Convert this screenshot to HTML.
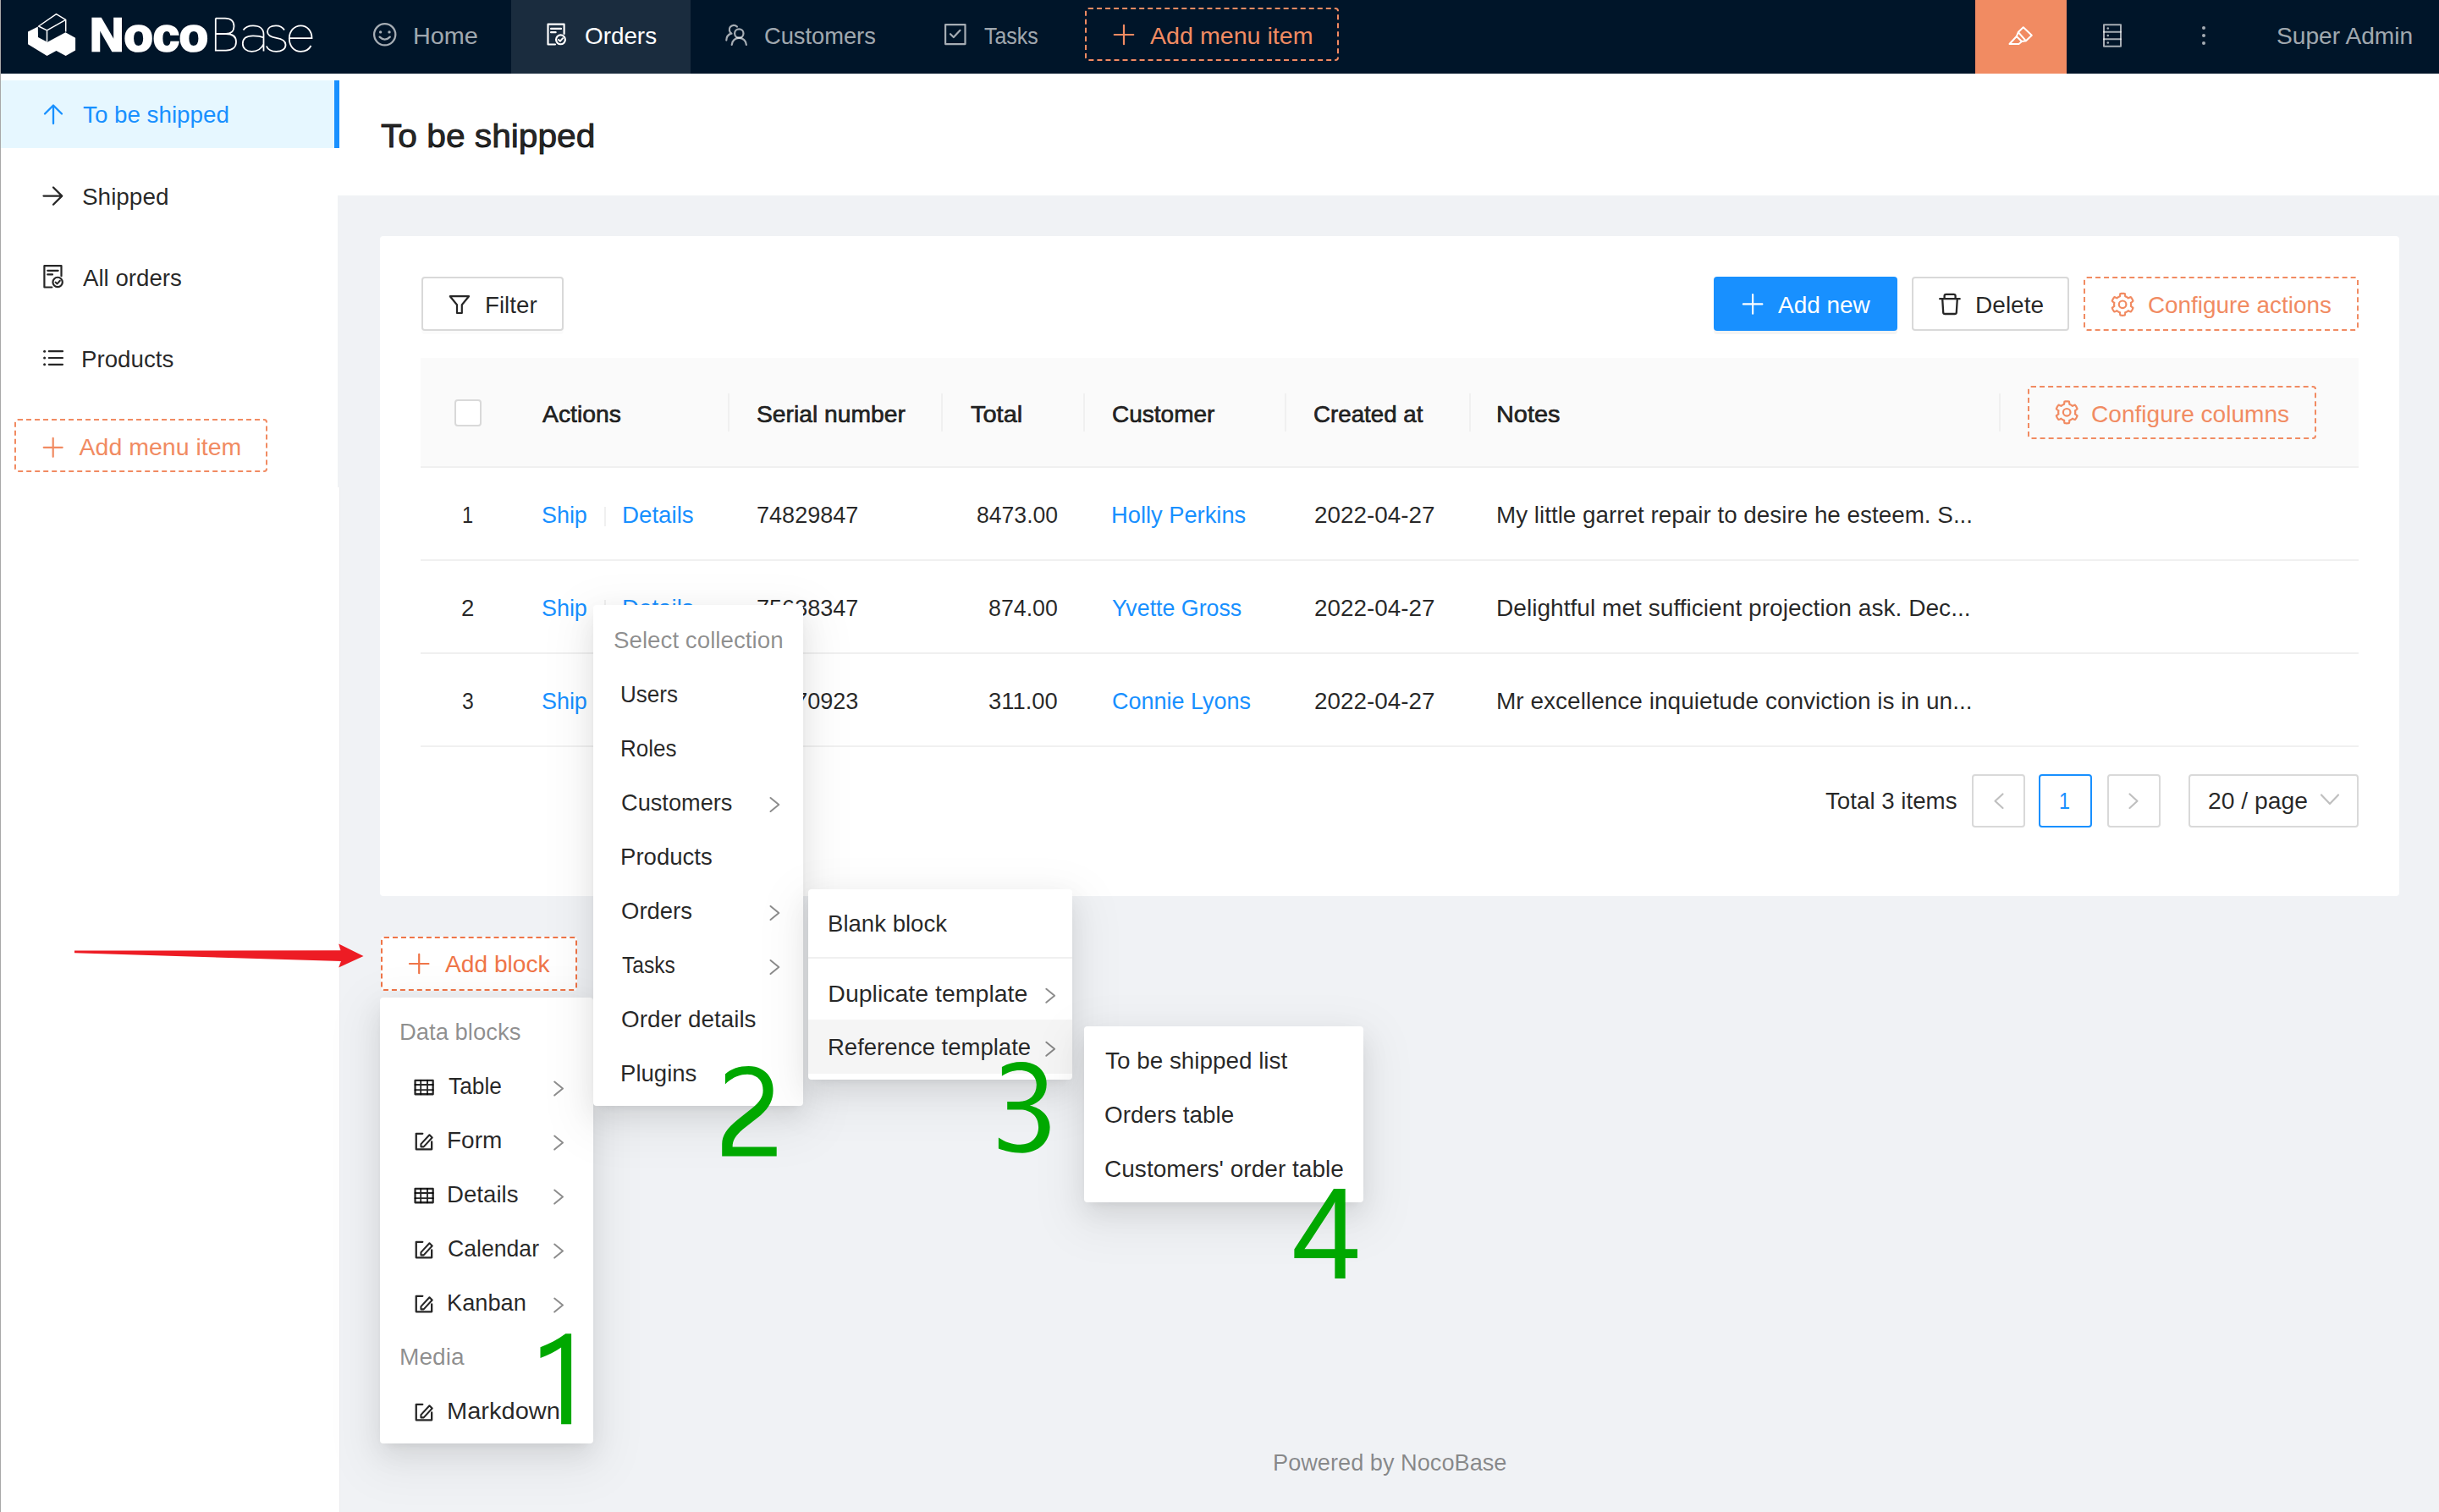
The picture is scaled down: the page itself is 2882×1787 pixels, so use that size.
<!DOCTYPE html><html><head><meta charset="utf-8"><style>
*{margin:0;padding:0;box-sizing:border-box}
html,body{width:2882px;height:1787px;overflow:hidden}
body{position:relative;background:#f0f2f5;font-family:"Liberation Sans",sans-serif}
.a{position:absolute;display:block}
.t{position:absolute;white-space:nowrap;transform-origin:0 0}
</style></head><body><div class="a" style="left:0px;top:0px;width:2882px;height:87px;background:#001529"></div><div class="a" style="left:604px;top:0px;width:212px;height:87px;background:rgba(255,255,255,0.1)"></div><div class="a" style="left:2334px;top:0px;width:108px;height:87px;background:#f18b62"></div><svg class="a" style="left:25px;top:8px;" width="355" height="67" viewBox="25 8 355 67"><path d="M33,37.5 L44.8,31.6 L45,44 L56,49.8 L77.4,38.2 L89.1,44.8 L89.1,59.4 L77.7,65.9 L66.5,59.9 L55.5,65.9 L33,52.3 Z" fill="#fff"/><path d="M45.6,31 L66.5,16.6 L77.7,23.3 L55.5,35.8 Z M55.5,35.8 V49.6 M77.7,23.3 V37.6" fill="none" stroke="#fff" stroke-width="1.5" stroke-linejoin="round"/><text x="106" y="60.2" font-family="Liberation Sans" font-weight="700" font-size="56" fill="#fff" stroke="#fff" stroke-width="2.6" textLength="140" lengthAdjust="spacingAndGlyphs">Noco</text><path d="M254.8,21.6 V59.6 H267 C275,59.6 279,55.5 279,49.5 C279,43.5 275,40 267,40 H254.8 M267,40 C273.5,40 276.5,36.5 276.5,31 C276.5,25.5 273,21.6 266,21.6 H254.8 M287.5,35.5 C290,31.5 294.5,30.3 299,30.3 C306.5,30.3 311.5,33.8 311.5,40.5 V60.5 M311.5,44.5 C308,42.8 303,42.3 299,42.3 C291.5,42.3 286.8,45.5 286.8,51.5 C286.8,57.5 291.5,60.8 297.5,60.8 C303.5,60.8 309,57.5 311.5,52 M336,35.5 C334,32 330,30.3 326,30.3 C319.5,30.3 316,33.5 316,37.5 C316,42 320.5,43.8 326.5,44.8 C333,45.8 337.5,47.8 337.5,53 C337.5,57.8 333,60.8 326.5,60.8 C320.5,60.8 316.5,58.5 314.8,54.5 M342,45.2 H368.5 C368.5,36 362.5,30.3 355.5,30.3 C347.5,30.3 341.8,37 341.8,45.5 C341.8,54.5 347.5,60.8 355.5,60.8 C361,60.8 365.5,58 367.5,54" fill="none" stroke="#fff" stroke-width="1.8"/></svg><svg class="a" style="left:438px;top:24px;" width="34" height="34" viewBox="438 24 34 34"><circle cx="454.7" cy="40.8" r="12.6" fill="none" stroke="rgba(255,255,255,0.65)" stroke-width="2.3" stroke-linecap="round" stroke-linejoin="round"/><circle cx="449.6" cy="37.9" r="1.7" fill="rgba(255,255,255,0.65)"/><circle cx="460" cy="37.9" r="1.7" fill="rgba(255,255,255,0.65)"/><path d="M448.6,43.6 Q454.7,49.6 460.8,43.6" fill="none" stroke="rgba(255,255,255,0.65)" stroke-width="2.3" stroke-linecap="round" stroke-linejoin="round"/></svg><svg class="a" style="left:644px;top:25px;" width="27" height="32" viewBox="644 25 27 32"><path d="M655.985,52.5 H647.5 V28.6 H666.6 V39.88249999999998" fill="none" stroke="#fff" stroke-width="2.2" stroke-linecap="round" stroke-linejoin="round" stroke-linecap="butt" stroke-linejoin="miter"/><path d="M651.086,33.8945 H663.014 M651.086,38.201 H656.624" fill="none" stroke="#fff" stroke-width="2.2" stroke-linecap="round" stroke-linejoin="round" stroke-linecap="butt"/><circle cx="662.4815" cy="46.814" r="5.4315000000000175" fill="none" stroke="#fff" stroke-width="2.2" stroke-linecap="round" stroke-linejoin="round"/><path d="M660.037325,46.92263 L661.93835,48.715025000000004 L665.08862,45.184549999999994" fill="none" stroke="#fff" stroke-width="1.9800000000000002" stroke-linecap="round" stroke-linejoin="round"/></svg><svg class="a" style="left:852px;top:24px;" width="36" height="34" viewBox="852 24 36 34"><path d="M870.9,31.6 A5.2,5.2 0 1 0 864.5,39.6 M864.2,39.4 C860.5,40.8 858.3,44.2 858.3,47.6" fill="none" stroke="rgba(255,255,255,0.65)" stroke-width="2.2" stroke-linecap="round" stroke-linejoin="round"/><circle cx="873.3" cy="39.5" r="5.2" fill="none" stroke="rgba(255,255,255,0.65)" stroke-width="2.2" stroke-linecap="round" stroke-linejoin="round"/><path d="M864.7,53 C864.9,48 868.8,44.9 873.3,44.9 C877.8,44.9 881.7,48 881.9,53" fill="none" stroke="rgba(255,255,255,0.65)" stroke-width="2.2" stroke-linecap="round" stroke-linejoin="round"/></svg><svg class="a" style="left:1112px;top:24px;" width="34" height="34" viewBox="1112 24 34 34"><rect x="1117.1" y="29.1" width="23.4" height="23" fill="none" stroke="rgba(255,255,255,0.65)" stroke-width="2.2" stroke-linecap="round" stroke-linejoin="round" stroke-linejoin="miter"/><path d="M1123,40.2 L1126.8,44 L1134.5,35.8" fill="none" stroke="rgba(255,255,255,0.65)" stroke-width="2.2" stroke-linecap="round" stroke-linejoin="round" stroke-linecap="butt" stroke-linejoin="miter"/></svg><div class="a" style="left:1282px;top:9px;width:300px;height:63px;border:2px dashed #f18b62;border-radius:4px"></div><svg class="a" style="left:1313px;top:26px;" width="30" height="30" viewBox="1313 26 30 30"><path d="M1316.75,41 H1339.25 M1328,29.75 V52.25" fill="none" stroke="#f18b62" stroke-width="2.2" stroke-linecap="round" stroke-linejoin="round"/></svg><svg class="a" style="left:2370px;top:26px;" width="38" height="32" viewBox="2370 26 38 32"><path d="M2384.8,38 L2390.8,32.2 L2400.8,41.7 L2394,48.3 Z" fill="none" stroke="#fff" stroke-width="2" stroke-linejoin="round"/><path d="M2384.8,38 L2382.8,43 L2389,49 L2394,48.3 M2382.8,43 L2374.5,52 H2385.5 L2389,49" fill="none" stroke="#fff" stroke-width="2" stroke-linejoin="round"/></svg><svg class="a" style="left:2482px;top:25px;" width="28" height="34" viewBox="2482 25 28 34"><rect x="2486" y="29.2" width="20" height="25.5" fill="none" stroke="rgba(255,255,255,0.65)" stroke-width="2" stroke-linecap="round" stroke-linejoin="round" stroke-linejoin="miter"/><path d="M2486,37.8 H2506 M2486,46.2 H2506" fill="none" stroke="rgba(255,255,255,0.65)" stroke-width="2" stroke-linecap="round" stroke-linejoin="round"/><circle cx="2490.8" cy="33.5" r="1.3" fill="rgba(255,255,255,0.65)"/><circle cx="2490.8" cy="42" r="1.3" fill="rgba(255,255,255,0.65)"/><circle cx="2490.8" cy="50.5" r="1.3" fill="rgba(255,255,255,0.65)"/></svg><svg class="a" style="left:2598px;top:26px;" width="12" height="32" viewBox="2598 26 12 32"><circle cx="2604" cy="33" r="2" fill="rgba(255,255,255,0.65)"/><circle cx="2604" cy="42" r="2" fill="rgba(255,255,255,0.65)"/><circle cx="2604" cy="51" r="2" fill="rgba(255,255,255,0.65)"/></svg><div class="t" style="left:487.78px;top:27.57px;font-size:28.5px;line-height:28.5px;color:rgba(255,255,255,0.65);transform:scaleX(1.0110);">Home</div><div class="t" style="left:691.02px;top:27.57px;font-size:28.5px;line-height:28.5px;color:#fff;transform:scaleX(0.9765);">Orders</div><div class="t" style="left:903.34px;top:27.57px;font-size:28.5px;line-height:28.5px;color:rgba(255,255,255,0.65);transform:scaleX(0.9566);">Customers</div><div class="t" style="left:1163.00px;top:27.57px;font-size:28.5px;line-height:28.5px;color:rgba(255,255,255,0.65);transform:scaleX(0.8736);">Tasks</div><div class="t" style="left:1358.80px;top:27.57px;font-size:28.5px;line-height:28.5px;color:#f18b62;transform:scaleX(1.0047);">Add menu item</div><div class="t" style="left:2690.01px;top:27.57px;font-size:28.5px;line-height:28.5px;color:rgba(255,255,255,0.65);transform:scaleX(0.9876);">Super Admin</div><div class="a" style="left:0px;top:87px;width:401px;height:1700px;background:#fff"></div><div class="a" style="left:399px;top:231px;width:2px;height:345px;background:#f0f2f5"></div><div class="a" style="left:401px;top:576px;width:1px;height:1211px;background:#ebecef"></div><div class="a" style="left:1px;top:95px;width:394px;height:80px;background:#e6f7ff"></div><div class="a" style="left:395px;top:95px;width:6px;height:80px;background:#1890ff"></div><svg class="a" style="left:48px;top:120px;" width="30" height="30" viewBox="48 120 30 30"><path d="M63,146 V125 M53,134.5 L63,124.5 L73,134.5" fill="none" stroke="#1890ff" stroke-width="2.3" stroke-linecap="round" stroke-linejoin="round" stroke-linecap="butt" stroke-linejoin="miter"/></svg><svg class="a" style="left:47px;top:217px;" width="31" height="29" viewBox="47 217 31 29"><path d="M51.5,231.6 H72.5 M63,221.5 L73.2,231.6 L63,241.7" fill="none" stroke="rgba(0,0,0,0.85)" stroke-width="2.3" stroke-linecap="round" stroke-linejoin="round" stroke-linecap="butt" stroke-linejoin="miter"/></svg><svg class="a" style="left:49px;top:311px;" width="28" height="33" viewBox="49 311 28 33"><path d="M61.334999999999994,339.5 H52.4 V314.20000000000005 H72.5 V326.2635" fill="none" stroke="rgba(0,0,0,0.85)" stroke-width="2.2" stroke-linecap="round" stroke-linejoin="round" stroke-linecap="butt" stroke-linejoin="miter"/><path d="M56.205999999999996,319.83750000000003 H68.69399999999999 M56.205999999999996,324.375 H62.004" fill="none" stroke="rgba(0,0,0,0.85)" stroke-width="2.2" stroke-linecap="round" stroke-linejoin="round" stroke-linecap="butt"/><circle cx="68.1365" cy="333.45000000000005" r="5.6865" fill="none" stroke="rgba(0,0,0,0.85)" stroke-width="2.2" stroke-linecap="round" stroke-linejoin="round"/><path d="M65.577575,333.56373 L67.56784999999999,335.44027500000004 L70.86601999999999,331.7440500000001" fill="none" stroke="rgba(0,0,0,0.85)" stroke-width="1.9800000000000002" stroke-linecap="round" stroke-linejoin="round"/></svg><svg class="a" style="left:47px;top:410px;" width="31" height="26" viewBox="47 410 31 26"><circle cx="52.6" cy="415.2" r="1.5" fill="rgba(0,0,0,0.85)"/><circle cx="52.6" cy="423" r="1.5" fill="rgba(0,0,0,0.85)"/><circle cx="52.6" cy="430.8" r="1.5" fill="rgba(0,0,0,0.85)"/><path d="M57.8,415.2 H74 M57.8,423 H74 M57.8,430.8 H74" fill="none" stroke="rgba(0,0,0,0.85)" stroke-width="2.2" stroke-linecap="round" stroke-linejoin="round" stroke-linecap="butt"/></svg><div class="a" style="left:17px;top:495px;width:299px;height:63px;border:2px dashed #f18b62;border-radius:4px"></div><svg class="a" style="left:48px;top:514px;" width="29" height="29" viewBox="48 514 29 29"><path d="M51.7,528.8 H73.7 M62.7,517.8 V539.8" fill="none" stroke="#f18b62" stroke-width="2.2" stroke-linecap="round" stroke-linejoin="round"/></svg><div class="t" style="left:97.60px;top:121.37px;font-size:28.5px;line-height:28.5px;color:#1890ff;transform:scaleX(0.9739);">To be shipped</div><div class="t" style="left:96.52px;top:217.87px;font-size:28.5px;line-height:28.5px;color:rgba(0,0,0,0.85);transform:scaleX(0.9794);">Shipped</div><div class="t" style="left:97.50px;top:313.87px;font-size:28.5px;line-height:28.5px;color:rgba(0,0,0,0.85);transform:scaleX(0.9708);">All orders</div><div class="t" style="left:95.56px;top:409.67px;font-size:28.5px;line-height:28.5px;color:rgba(0,0,0,0.85);transform:scaleX(0.9718);">Products</div><div class="t" style="left:93.60px;top:513.87px;font-size:28.5px;line-height:28.5px;color:#f18b62;">Add menu item</div><div class="a" style="left:0px;top:0px;width:1px;height:1787px;background:#a8a8a8"></div><div class="a" style="left:401px;top:87px;width:2481px;height:144px;background:#fff"></div><div class="t" style="left:449.70px;top:141.36px;font-size:39.5px;line-height:39.5px;color:rgba(0,0,0,0.85);-webkit-text-stroke:0.9px rgba(0,0,0,0.85);transform:scaleX(1.0299);">To be shipped</div><div class="a" style="left:449px;top:279px;width:2386px;height:780px;background:#fff;border-radius:4px"></div><div class="a" style="left:498px;top:327px;width:168px;height:64px;border:2px solid #d9d9d9;border-radius:4px;background:#fff;box-shadow:0 4px 0 rgba(0,0,0,0.015)"></div><svg class="a" style="left:527px;top:345px;" width="33" height="30" viewBox="527 345 33 30"><path d="M531.8,350.2 H554 L545.8,360.2 V370 H540 V360.2 Z" fill="none" stroke="rgba(0,0,0,0.85)" stroke-width="2.2" stroke-linecap="round" stroke-linejoin="round" stroke-linejoin="miter"/></svg><div class="a" style="left:2025px;top:327px;width:217px;height:64px;background:#1890ff;border-radius:4px;box-shadow:0 4px 0 rgba(0,0,0,0.045)"></div><svg class="a" style="left:2056px;top:345px;" width="30" height="29" viewBox="2056 345 30 29"><path d="M2059.85,359.4 H2082.35 M2071.1,348.15 V370.65" fill="none" stroke="#fff" stroke-width="2.2" stroke-linecap="round" stroke-linejoin="round"/></svg><div class="a" style="left:2259px;top:327px;width:186px;height:64px;border:2px solid #d9d9d9;border-radius:4px;background:#fff"></div><svg class="a" style="left:2288px;top:343px;" width="32" height="33" viewBox="2288 343 32 33"><path d="M2292.2,353.2 H2315.7 M2297.6,353 V349.8 Q2297.6,347.8 2299.6,347.8 H2308.6 Q2310.6,347.8 2310.6,349.8 V353 M2295.2,353.4 L2296.2,369.3 Q2296.4,371 2298.2,371 H2309.8 Q2311.6,371 2311.8,369.3 L2312.8,353.4" fill="none" stroke="rgba(0,0,0,0.85)" stroke-width="2.3" stroke-linecap="round" stroke-linejoin="round"/></svg><div class="a" style="left:2462px;top:327px;width:325px;height:64px;border:2px dashed #f18b62;border-radius:4px"></div><svg class="a" style="left:2492px;top:343px;" width="33" height="33" viewBox="2492 343 33 33"><path d="M2508.10,346.80 L2508.44,346.80 L2508.78,346.82 L2509.12,346.84 L2509.46,346.87 L2509.80,346.91 L2510.13,346.96 L2510.47,347.02 L2510.80,347.08 L2510.97,347.86 L2511.08,348.69 L2511.14,349.52 L2511.19,350.29 L2511.44,350.37 L2511.68,350.46 L2511.93,350.56 L2512.17,350.66 L2512.41,350.77 L2512.64,350.89 L2512.87,351.01 L2513.10,351.14 L2513.32,351.27 L2513.55,351.41 L2513.76,351.56 L2513.98,351.71 L2514.19,351.87 L2514.39,352.03 L2514.59,352.20 L2514.79,352.37 L2515.48,352.03 L2516.23,351.67 L2517.01,351.35 L2517.76,351.10 L2517.99,351.36 L2518.20,351.62 L2518.41,351.89 L2518.62,352.16 L2518.81,352.44 L2519.00,352.72 L2519.18,353.01 L2519.36,353.30 L2519.52,353.60 L2519.68,353.90 L2519.83,354.20 L2519.98,354.51 L2520.11,354.83 L2520.24,355.14 L2520.35,355.46 L2520.46,355.78 L2519.88,356.31 L2519.21,356.82 L2518.52,357.30 L2517.88,357.72 L2517.93,357.98 L2517.98,358.24 L2518.01,358.49 L2518.05,358.75 L2518.07,359.02 L2518.09,359.28 L2518.10,359.54 L2518.10,359.80 L2518.10,360.06 L2518.09,360.32 L2518.07,360.58 L2518.05,360.85 L2518.01,361.11 L2517.98,361.36 L2517.93,361.62 L2517.88,361.88 L2518.52,362.30 L2519.21,362.78 L2519.88,363.29 L2520.46,363.82 L2520.35,364.14 L2520.24,364.46 L2520.11,364.77 L2519.98,365.09 L2519.83,365.40 L2519.68,365.70 L2519.52,366.00 L2519.36,366.30 L2519.18,366.59 L2519.00,366.88 L2518.81,367.16 L2518.62,367.44 L2518.41,367.71 L2518.20,367.98 L2517.99,368.24 L2517.76,368.50 L2517.01,368.25 L2516.23,367.93 L2515.48,367.57 L2514.79,367.23 L2514.59,367.40 L2514.39,367.57 L2514.19,367.73 L2513.98,367.89 L2513.76,368.04 L2513.55,368.19 L2513.32,368.33 L2513.10,368.46 L2512.87,368.59 L2512.64,368.71 L2512.41,368.83 L2512.17,368.94 L2511.93,369.04 L2511.68,369.14 L2511.44,369.23 L2511.19,369.31 L2511.14,370.08 L2511.08,370.91 L2510.97,371.74 L2510.80,372.52 L2510.47,372.58 L2510.13,372.64 L2509.80,372.69 L2509.46,372.73 L2509.12,372.76 L2508.78,372.78 L2508.44,372.80 L2508.10,372.80 L2507.76,372.80 L2507.42,372.78 L2507.08,372.76 L2506.74,372.73 L2506.40,372.69 L2506.07,372.64 L2505.73,372.58 L2505.40,372.52 L2505.23,371.74 L2505.12,370.91 L2505.06,370.08 L2505.01,369.31 L2504.76,369.23 L2504.52,369.14 L2504.27,369.04 L2504.03,368.94 L2503.79,368.83 L2503.56,368.71 L2503.33,368.59 L2503.10,368.46 L2502.88,368.33 L2502.65,368.19 L2502.44,368.04 L2502.22,367.89 L2502.01,367.73 L2501.81,367.57 L2501.61,367.40 L2501.41,367.23 L2500.72,367.57 L2499.97,367.93 L2499.19,368.25 L2498.44,368.50 L2498.21,368.24 L2498.00,367.98 L2497.79,367.71 L2497.58,367.44 L2497.39,367.16 L2497.20,366.88 L2497.02,366.59 L2496.84,366.30 L2496.68,366.00 L2496.52,365.70 L2496.37,365.40 L2496.22,365.09 L2496.09,364.77 L2495.96,364.46 L2495.85,364.14 L2495.74,363.82 L2496.32,363.29 L2496.99,362.78 L2497.68,362.30 L2498.32,361.88 L2498.27,361.62 L2498.22,361.36 L2498.19,361.11 L2498.15,360.85 L2498.13,360.58 L2498.11,360.32 L2498.10,360.06 L2498.10,359.80 L2498.10,359.54 L2498.11,359.28 L2498.13,359.02 L2498.15,358.75 L2498.19,358.49 L2498.22,358.24 L2498.27,357.98 L2498.32,357.72 L2497.68,357.30 L2496.99,356.82 L2496.32,356.31 L2495.74,355.78 L2495.85,355.46 L2495.96,355.14 L2496.09,354.83 L2496.22,354.51 L2496.37,354.20 L2496.52,353.90 L2496.68,353.60 L2496.84,353.30 L2497.02,353.01 L2497.20,352.72 L2497.39,352.44 L2497.58,352.16 L2497.79,351.89 L2498.00,351.62 L2498.21,351.36 L2498.44,351.10 L2499.19,351.35 L2499.97,351.67 L2500.72,352.03 L2501.41,352.37 L2501.61,352.20 L2501.81,352.03 L2502.01,351.87 L2502.22,351.71 L2502.44,351.56 L2502.65,351.41 L2502.88,351.27 L2503.10,351.14 L2503.33,351.01 L2503.56,350.89 L2503.79,350.77 L2504.03,350.66 L2504.27,350.56 L2504.52,350.46 L2504.76,350.37 L2505.01,350.29 L2505.06,349.52 L2505.12,348.69 L2505.23,347.86 L2505.40,347.08 L2505.73,347.02 L2506.07,346.96 L2506.40,346.91 L2506.74,346.87 L2507.08,346.84 L2507.42,346.82 L2507.76,346.80 L2508.10,346.80 Z" fill="none" stroke="#f18b62" stroke-width="2.2" stroke-linecap="round" stroke-linejoin="round"/><circle cx="2508.1" cy="359.8" r="4.3" fill="none" stroke="#f18b62" stroke-width="2.2" stroke-linecap="round" stroke-linejoin="round"/></svg><div class="t" style="left:572.65px;top:345.87px;font-size:28.5px;line-height:28.5px;color:rgba(0,0,0,0.85);transform:scaleX(0.9738);">Filter</div><div class="t" style="left:2101.00px;top:345.87px;font-size:28.5px;line-height:28.5px;color:#fff;transform:scaleX(0.9802);">Add new</div><div class="t" style="left:2333.63px;top:345.87px;font-size:28.5px;line-height:28.5px;color:rgba(0,0,0,0.85);transform:scaleX(0.9848);">Delete</div><div class="t" style="left:2537.92px;top:345.87px;font-size:28.5px;line-height:28.5px;color:#f18b62;transform:scaleX(0.9777);">Configure actions</div><div class="a" style="left:497px;top:423px;width:2290px;height:128px;background:#fafafa"></div><div class="a" style="left:497px;top:551px;width:2290px;height:2px;background:#f0f0f0"></div><div class="a" style="left:860px;top:465px;width:2px;height:45px;background:#f0f0f0"></div><div class="a" style="left:1112px;top:465px;width:2px;height:45px;background:#f0f0f0"></div><div class="a" style="left:1280px;top:465px;width:2px;height:45px;background:#f0f0f0"></div><div class="a" style="left:1518px;top:465px;width:2px;height:45px;background:#f0f0f0"></div><div class="a" style="left:1735.5px;top:465px;width:2.0px;height:45px;background:#f0f0f0"></div><div class="a" style="left:2361.7px;top:465px;width:2.0px;height:45px;background:#f0f0f0"></div><div class="a" style="left:537px;top:472px;width:32px;height:32px;border:2px solid #d9d9d9;border-radius:4px;background:#fff"></div><div class="a" style="left:2396px;top:456px;width:341px;height:63px;border:2px dashed #f18b62;border-radius:4px"></div><svg class="a" style="left:2426px;top:471px;" width="33" height="33" viewBox="2426 471 33 33"><path d="M2442.20,474.30 L2442.54,474.30 L2442.88,474.32 L2443.22,474.34 L2443.56,474.37 L2443.90,474.41 L2444.23,474.46 L2444.57,474.52 L2444.90,474.58 L2445.07,475.36 L2445.18,476.19 L2445.24,477.02 L2445.29,477.79 L2445.54,477.87 L2445.78,477.96 L2446.03,478.06 L2446.27,478.16 L2446.51,478.27 L2446.74,478.39 L2446.97,478.51 L2447.20,478.64 L2447.42,478.77 L2447.65,478.91 L2447.86,479.06 L2448.08,479.21 L2448.29,479.37 L2448.49,479.53 L2448.69,479.70 L2448.89,479.87 L2449.58,479.53 L2450.33,479.17 L2451.11,478.85 L2451.86,478.60 L2452.09,478.86 L2452.30,479.12 L2452.51,479.39 L2452.72,479.66 L2452.91,479.94 L2453.10,480.22 L2453.28,480.51 L2453.46,480.80 L2453.62,481.10 L2453.78,481.40 L2453.93,481.70 L2454.08,482.01 L2454.21,482.33 L2454.34,482.64 L2454.45,482.96 L2454.56,483.28 L2453.98,483.81 L2453.31,484.32 L2452.62,484.80 L2451.98,485.22 L2452.03,485.48 L2452.08,485.74 L2452.11,485.99 L2452.15,486.25 L2452.17,486.52 L2452.19,486.78 L2452.20,487.04 L2452.20,487.30 L2452.20,487.56 L2452.19,487.82 L2452.17,488.08 L2452.15,488.35 L2452.11,488.61 L2452.08,488.86 L2452.03,489.12 L2451.98,489.38 L2452.62,489.80 L2453.31,490.28 L2453.98,490.79 L2454.56,491.32 L2454.45,491.64 L2454.34,491.96 L2454.21,492.27 L2454.08,492.59 L2453.93,492.90 L2453.78,493.20 L2453.62,493.50 L2453.46,493.80 L2453.28,494.09 L2453.10,494.38 L2452.91,494.66 L2452.72,494.94 L2452.51,495.21 L2452.30,495.48 L2452.09,495.74 L2451.86,496.00 L2451.11,495.75 L2450.33,495.43 L2449.58,495.07 L2448.89,494.73 L2448.69,494.90 L2448.49,495.07 L2448.29,495.23 L2448.08,495.39 L2447.86,495.54 L2447.65,495.69 L2447.42,495.83 L2447.20,495.96 L2446.97,496.09 L2446.74,496.21 L2446.51,496.33 L2446.27,496.44 L2446.03,496.54 L2445.78,496.64 L2445.54,496.73 L2445.29,496.81 L2445.24,497.58 L2445.18,498.41 L2445.07,499.24 L2444.90,500.02 L2444.57,500.08 L2444.23,500.14 L2443.90,500.19 L2443.56,500.23 L2443.22,500.26 L2442.88,500.28 L2442.54,500.30 L2442.20,500.30 L2441.86,500.30 L2441.52,500.28 L2441.18,500.26 L2440.84,500.23 L2440.50,500.19 L2440.17,500.14 L2439.83,500.08 L2439.50,500.02 L2439.33,499.24 L2439.22,498.41 L2439.16,497.58 L2439.11,496.81 L2438.86,496.73 L2438.62,496.64 L2438.37,496.54 L2438.13,496.44 L2437.89,496.33 L2437.66,496.21 L2437.43,496.09 L2437.20,495.96 L2436.98,495.83 L2436.75,495.69 L2436.54,495.54 L2436.32,495.39 L2436.11,495.23 L2435.91,495.07 L2435.71,494.90 L2435.51,494.73 L2434.82,495.07 L2434.07,495.43 L2433.29,495.75 L2432.54,496.00 L2432.31,495.74 L2432.10,495.48 L2431.89,495.21 L2431.68,494.94 L2431.49,494.66 L2431.30,494.38 L2431.12,494.09 L2430.94,493.80 L2430.78,493.50 L2430.62,493.20 L2430.47,492.90 L2430.32,492.59 L2430.19,492.27 L2430.06,491.96 L2429.95,491.64 L2429.84,491.32 L2430.42,490.79 L2431.09,490.28 L2431.78,489.80 L2432.42,489.38 L2432.37,489.12 L2432.32,488.86 L2432.29,488.61 L2432.25,488.35 L2432.23,488.08 L2432.21,487.82 L2432.20,487.56 L2432.20,487.30 L2432.20,487.04 L2432.21,486.78 L2432.23,486.52 L2432.25,486.25 L2432.29,485.99 L2432.32,485.74 L2432.37,485.48 L2432.42,485.22 L2431.78,484.80 L2431.09,484.32 L2430.42,483.81 L2429.84,483.28 L2429.95,482.96 L2430.06,482.64 L2430.19,482.33 L2430.32,482.01 L2430.47,481.70 L2430.62,481.40 L2430.78,481.10 L2430.94,480.80 L2431.12,480.51 L2431.30,480.22 L2431.49,479.94 L2431.68,479.66 L2431.89,479.39 L2432.10,479.12 L2432.31,478.86 L2432.54,478.60 L2433.29,478.85 L2434.07,479.17 L2434.82,479.53 L2435.51,479.87 L2435.71,479.70 L2435.91,479.53 L2436.11,479.37 L2436.32,479.21 L2436.54,479.06 L2436.75,478.91 L2436.98,478.77 L2437.20,478.64 L2437.43,478.51 L2437.66,478.39 L2437.89,478.27 L2438.13,478.16 L2438.37,478.06 L2438.62,477.96 L2438.86,477.87 L2439.11,477.79 L2439.16,477.02 L2439.22,476.19 L2439.33,475.36 L2439.50,474.58 L2439.83,474.52 L2440.17,474.46 L2440.50,474.41 L2440.84,474.37 L2441.18,474.34 L2441.52,474.32 L2441.86,474.30 L2442.20,474.30 Z" fill="none" stroke="#f18b62" stroke-width="2.2" stroke-linecap="round" stroke-linejoin="round"/><circle cx="2442.2" cy="487.3" r="4.3" fill="none" stroke="#f18b62" stroke-width="2.2" stroke-linecap="round" stroke-linejoin="round"/></svg><div class="t" style="left:641.49px;top:474.87px;font-size:28.5px;line-height:28.5px;color:rgba(0,0,0,0.85);-webkit-text-stroke:0.7px rgba(0,0,0,0.85);transform:scaleX(0.9936);">Actions</div><div class="t" style="left:894.01px;top:474.87px;font-size:28.5px;line-height:28.5px;color:rgba(0,0,0,0.85);-webkit-text-stroke:0.7px rgba(0,0,0,0.85);transform:scaleX(0.9910);">Serial number</div><div class="t" style="left:1147.00px;top:474.87px;font-size:28.5px;line-height:28.5px;color:rgba(0,0,0,0.85);-webkit-text-stroke:0.7px rgba(0,0,0,0.85);transform:scaleX(1.0169);">Total</div><div class="t" style="left:1313.72px;top:474.87px;font-size:28.5px;line-height:28.5px;color:rgba(0,0,0,0.85);-webkit-text-stroke:0.7px rgba(0,0,0,0.85);transform:scaleX(0.9829);">Customer</div><div class="t" style="left:1552.03px;top:474.87px;font-size:28.5px;line-height:28.5px;color:rgba(0,0,0,0.85);-webkit-text-stroke:0.7px rgba(0,0,0,0.85);transform:scaleX(0.9722);">Created at</div><div class="t" style="left:1767.97px;top:474.87px;font-size:28.5px;line-height:28.5px;color:rgba(0,0,0,0.85);-webkit-text-stroke:0.7px rgba(0,0,0,0.85);transform:scaleX(1.0139);">Notes</div><div class="t" style="left:2471.01px;top:474.87px;font-size:28.5px;line-height:28.5px;color:#f18b62;transform:scaleX(0.9852);">Configure columns</div><div class="a" style="left:497px;top:661px;width:2290px;height:2px;background:#f0f0f0"></div><div class="a" style="left:714px;top:599px;width:2px;height:23px;background:#f0f0f0"></div><div class="t" style="left:546.24px;top:593.87px;font-size:28.5px;line-height:28.5px;color:rgba(0,0,0,0.85);transform:scaleX(0.8308);">1</div><div class="t" style="left:640.36px;top:593.87px;font-size:28.5px;line-height:28.5px;color:#1890ff;transform:scaleX(0.9436);">Ship</div><div class="t" style="left:735.46px;top:593.87px;font-size:28.5px;line-height:28.5px;color:#1890ff;transform:scaleX(0.9714);">Details</div><div class="t" style="left:893.95px;top:593.87px;font-size:28.5px;line-height:28.5px;color:rgba(0,0,0,0.85);transform:scaleX(0.9496);">74829847</div><div class="t" style="left:1153.67px;top:593.87px;font-size:28.5px;line-height:28.5px;color:rgba(0,0,0,0.85);transform:scaleX(0.9327);">8473.00</div><div class="t" style="left:1312.99px;top:593.87px;font-size:28.5px;line-height:28.5px;color:#1890ff;transform:scaleX(0.9573);">Holly Perkins</div><div class="t" style="left:1552.72px;top:593.87px;font-size:28.5px;line-height:28.5px;color:rgba(0,0,0,0.85);transform:scaleX(0.9778);">2022-04-27</div><div class="t" style="left:1768.05px;top:593.87px;font-size:28.5px;line-height:28.5px;color:rgba(0,0,0,0.85);transform:scaleX(0.9766);">My little garret repair to desire he esteem. S...</div><div class="a" style="left:497px;top:771px;width:2290px;height:2px;background:#f0f0f0"></div><div class="a" style="left:714px;top:709px;width:2px;height:23px;background:#f0f0f0"></div><div class="t" style="left:544.73px;top:703.87px;font-size:28.5px;line-height:28.5px;color:rgba(0,0,0,0.85);transform:scaleX(0.9714);">2</div><div class="t" style="left:640.36px;top:703.87px;font-size:28.5px;line-height:28.5px;color:#1890ff;transform:scaleX(0.9436);">Ship</div><div class="t" style="left:735.46px;top:703.87px;font-size:28.5px;line-height:28.5px;color:#1890ff;transform:scaleX(0.9714);">Details</div><div class="t" style="left:893.95px;top:703.87px;font-size:28.5px;line-height:28.5px;color:rgba(0,0,0,0.85);transform:scaleX(0.9496);">75638347</div><div class="t" style="left:1168.06px;top:703.87px;font-size:28.5px;line-height:28.5px;color:rgba(0,0,0,0.85);transform:scaleX(0.9388);">874.00</div><div class="t" style="left:1313.96px;top:703.87px;font-size:28.5px;line-height:28.5px;color:#1890ff;transform:scaleX(0.9389);">Yvette Gross</div><div class="t" style="left:1552.72px;top:703.87px;font-size:28.5px;line-height:28.5px;color:rgba(0,0,0,0.85);transform:scaleX(0.9778);">2022-04-27</div><div class="t" style="left:1768.03px;top:703.87px;font-size:28.5px;line-height:28.5px;color:rgba(0,0,0,0.85);transform:scaleX(0.9867);">Delightful met sufficient projection ask. Dec...</div><div class="a" style="left:497px;top:881px;width:2290px;height:2px;background:#f0f0f0"></div><div class="a" style="left:714px;top:819px;width:2px;height:23px;background:#f0f0f0"></div><div class="t" style="left:545.53px;top:813.87px;font-size:28.5px;line-height:28.5px;color:rgba(0,0,0,0.85);transform:scaleX(0.8714);">3</div><div class="t" style="left:640.36px;top:813.87px;font-size:28.5px;line-height:28.5px;color:#1890ff;transform:scaleX(0.9436);">Ship</div><div class="t" style="left:735.46px;top:813.87px;font-size:28.5px;line-height:28.5px;color:#1890ff;transform:scaleX(0.9714);">Details</div><div class="t" style="left:893.95px;top:813.87px;font-size:28.5px;line-height:28.5px;color:rgba(0,0,0,0.85);transform:scaleX(0.9496);">74570923</div><div class="t" style="left:1168.04px;top:813.87px;font-size:28.5px;line-height:28.5px;color:rgba(0,0,0,0.85);transform:scaleX(0.9614);">311.00</div><div class="t" style="left:1313.95px;top:813.87px;font-size:28.5px;line-height:28.5px;color:#1890ff;transform:scaleX(0.9459);">Connie Lyons</div><div class="t" style="left:1552.72px;top:813.87px;font-size:28.5px;line-height:28.5px;color:rgba(0,0,0,0.85);transform:scaleX(0.9778);">2022-04-27</div><div class="t" style="left:1768.03px;top:813.87px;font-size:28.5px;line-height:28.5px;color:rgba(0,0,0,0.85);transform:scaleX(0.9836);">Mr excellence inquietude conviction is in un...</div><div class="a" style="left:2330px;top:915px;width:63px;height:63px;border:2px solid #d9d9d9;border-radius:4px"></div><div class="a" style="left:2409px;top:915px;width:63px;height:63px;border:2px solid #1890ff;border-radius:4px"></div><div class="a" style="left:2490px;top:915px;width:63px;height:63px;border:2px solid #d9d9d9;border-radius:4px"></div><div class="a" style="left:2586px;top:915px;width:201px;height:63px;border:2px solid #d9d9d9;border-radius:4px"></div><svg class="a" style="left:2350px;top:932px;" width="22" height="30" viewBox="2350 932 22 30"><path d="M2366.5,938.5 L2357.5,946.8 L2366.5,955" fill="none" stroke="rgba(0,0,0,0.25)" stroke-width="2.2" stroke-linecap="round" stroke-linejoin="round" stroke-linecap="butt" stroke-linejoin="miter"/></svg><svg class="a" style="left:2510px;top:932px;" width="22" height="30" viewBox="2510 932 22 30"><path d="M2516.5,938.5 L2525.5,946.8 L2516.5,955" fill="none" stroke="rgba(0,0,0,0.25)" stroke-width="2.2" stroke-linecap="round" stroke-linejoin="round" stroke-linecap="butt" stroke-linejoin="miter"/></svg><svg class="a" style="left:2738px;top:932px;" width="30" height="26" viewBox="2738 932 30 26"><path d="M2743,939.5 L2753,950 L2763,939.5" fill="none" stroke="rgba(0,0,0,0.25)" stroke-width="2.2" stroke-linecap="round" stroke-linejoin="round" stroke-linecap="butt" stroke-linejoin="miter"/></svg><div class="t" style="left:2157.00px;top:931.87px;font-size:28.5px;line-height:28.5px;color:rgba(0,0,0,0.85);transform:scaleX(0.9723);">Total 3 items</div><div class="t" style="left:2433.37px;top:931.87px;font-size:28.5px;line-height:28.5px;color:#1890ff;transform:scaleX(0.8154);">1</div><div class="t" style="left:2608.81px;top:931.87px;font-size:28.5px;line-height:28.5px;color:rgba(0,0,0,0.85);transform:scaleX(0.9932);">20 / page</div><div class="a" style="left:450px;top:1107px;width:232px;height:64px;border:2px dashed #ef7548;border-radius:4px;background:#fff"></div><svg class="a" style="left:480px;top:1124px;" width="30" height="30" viewBox="480 1124 30 30"><path d="M483.95,1139 H506.45 M495.2,1127.75 V1150.25" fill="none" stroke="#ef7548" stroke-width="2.2" stroke-linecap="round" stroke-linejoin="round"/></svg><div class="t" style="left:525.50px;top:1125.47px;font-size:28.5px;line-height:28.5px;color:#ef7548;transform:scaleX(0.9880);">Add block</div><div class="t" style="left:1503.69px;top:1713.87px;font-size:28.5px;line-height:28.5px;color:rgba(0,0,0,0.45);transform:scaleX(0.9537);">Powered by NocoBase</div><div class="a" style="left:449px;top:1179px;width:252px;height:527px;background:#fff;border-radius:4px;box-shadow:0 6px 12px -8px rgba(0,0,0,0.12),0 12px 32px 0 rgba(0,0,0,0.08),0 18px 56px 16px rgba(0,0,0,0.05);"></div><svg class="a" style="left:487px;top:1273px;" width="28" height="24" viewBox="487 1273 28 24"><rect x="490.54999999999995" y="1276.95" width="21.099999999999977" height="16.29999999999991" fill="none" stroke="rgba(0,0,0,0.85)" stroke-width="2.3" stroke-linecap="round" stroke-linejoin="round" stroke-linejoin="miter"/><path d="M497.2,1276.95 V1293.2499999999998 M504.99999999999994,1276.95 V1293.2499999999998 M490.54999999999995,1282.0 H511.65 M490.54999999999995,1288.1999999999998 H511.65" fill="none" stroke="rgba(0,0,0,0.85)" stroke-width="1.8399999999999999" stroke-linecap="round" stroke-linejoin="round" stroke-linecap="butt"/></svg><svg class="a" style="left:488px;top:1336px;" width="26" height="26" viewBox="488 1336 26 26"><path d="M499.29400000000004,1339.85 H491.75 V1358.35 H510.15000000000003 V1349.5159999999998" fill="none" stroke="rgba(0,0,0,0.85)" stroke-width="2.3" stroke-linecap="round" stroke-linejoin="round" stroke-linecap="butt" stroke-linejoin="miter"/><path d="M497.43100000000004,1355.34 L497.43100000000004,1352.1399999999999 L507.47900000000004,1341.244 L510.67900000000003,1344.444 L500.63100000000003,1355.34 Z" fill="none" stroke="rgba(0,0,0,0.85)" stroke-width="2.07" stroke-linecap="round" stroke-linejoin="round"/></svg><svg class="a" style="left:487px;top:1401px;" width="28" height="24" viewBox="487 1401 28 24"><rect x="490.54999999999995" y="1404.95" width="21.099999999999977" height="16.29999999999991" fill="none" stroke="rgba(0,0,0,0.85)" stroke-width="2.3" stroke-linecap="round" stroke-linejoin="round" stroke-linejoin="miter"/><path d="M497.2,1404.95 V1421.2499999999998 M504.99999999999994,1404.95 V1421.2499999999998 M490.54999999999995,1410.0 H511.65 M490.54999999999995,1416.1999999999998 H511.65" fill="none" stroke="rgba(0,0,0,0.85)" stroke-width="1.8399999999999999" stroke-linecap="round" stroke-linejoin="round" stroke-linecap="butt"/></svg><svg class="a" style="left:488px;top:1464px;" width="26" height="26" viewBox="488 1464 26 26"><path d="M499.29400000000004,1467.85 H491.75 V1486.35 H510.15000000000003 V1477.5159999999998" fill="none" stroke="rgba(0,0,0,0.85)" stroke-width="2.3" stroke-linecap="round" stroke-linejoin="round" stroke-linecap="butt" stroke-linejoin="miter"/><path d="M497.43100000000004,1483.34 L497.43100000000004,1480.1399999999999 L507.47900000000004,1469.244 L510.67900000000003,1472.444 L500.63100000000003,1483.34 Z" fill="none" stroke="rgba(0,0,0,0.85)" stroke-width="2.07" stroke-linecap="round" stroke-linejoin="round"/></svg><svg class="a" style="left:488px;top:1528px;" width="26" height="26" viewBox="488 1528 26 26"><path d="M499.29400000000004,1531.85 H491.75 V1550.35 H510.15000000000003 V1541.5159999999998" fill="none" stroke="rgba(0,0,0,0.85)" stroke-width="2.3" stroke-linecap="round" stroke-linejoin="round" stroke-linecap="butt" stroke-linejoin="miter"/><path d="M497.43100000000004,1547.34 L497.43100000000004,1544.1399999999999 L507.47900000000004,1533.244 L510.67900000000003,1536.444 L500.63100000000003,1547.34 Z" fill="none" stroke="rgba(0,0,0,0.85)" stroke-width="2.07" stroke-linecap="round" stroke-linejoin="round"/></svg><svg class="a" style="left:488px;top:1656px;" width="26" height="26" viewBox="488 1656 26 26"><path d="M499.29400000000004,1659.85 H491.75 V1678.35 H510.15000000000003 V1669.5159999999998" fill="none" stroke="rgba(0,0,0,0.85)" stroke-width="2.3" stroke-linecap="round" stroke-linejoin="round" stroke-linecap="butt" stroke-linejoin="miter"/><path d="M497.43100000000004,1675.34 L497.43100000000004,1672.1399999999999 L507.47900000000004,1661.244 L510.67900000000003,1664.444 L500.63100000000003,1675.34 Z" fill="none" stroke="rgba(0,0,0,0.85)" stroke-width="2.07" stroke-linecap="round" stroke-linejoin="round"/></svg><svg class="a" style="left:652px;top:1275px;" width="17" height="23" viewBox="652 1275 17 23"><path d="M655.2,1278.6 L665.0,1286.6 L655.2,1294.6" fill="none" stroke="rgba(0,0,0,0.45)" stroke-width="2.0" stroke-linecap="round" stroke-linejoin="round" stroke-linejoin="miter"/></svg><svg class="a" style="left:652px;top:1339px;" width="17" height="23" viewBox="652 1339 17 23"><path d="M655.2,1342.6 L665.0,1350.6 L655.2,1358.6" fill="none" stroke="rgba(0,0,0,0.45)" stroke-width="2.0" stroke-linecap="round" stroke-linejoin="round" stroke-linejoin="miter"/></svg><svg class="a" style="left:652px;top:1403px;" width="17" height="23" viewBox="652 1403 17 23"><path d="M655.2,1406.6 L665.0,1414.6 L655.2,1422.6" fill="none" stroke="rgba(0,0,0,0.45)" stroke-width="2.0" stroke-linecap="round" stroke-linejoin="round" stroke-linejoin="miter"/></svg><svg class="a" style="left:652px;top:1467px;" width="17" height="23" viewBox="652 1467 17 23"><path d="M655.2,1470.6 L665.0,1478.6 L655.2,1486.6" fill="none" stroke="rgba(0,0,0,0.45)" stroke-width="2.0" stroke-linecap="round" stroke-linejoin="round" stroke-linejoin="miter"/></svg><svg class="a" style="left:652px;top:1531px;" width="17" height="23" viewBox="652 1531 17 23"><path d="M655.2,1534.6 L665.0,1542.6 L655.2,1550.6" fill="none" stroke="rgba(0,0,0,0.45)" stroke-width="2.0" stroke-linecap="round" stroke-linejoin="round" stroke-linejoin="miter"/></svg><div class="t" style="left:472.47px;top:1205.47px;font-size:28.5px;line-height:28.5px;color:rgba(0,0,0,0.45);transform:scaleX(0.9630);">Data blocks</div><div class="t" style="left:530.00px;top:1269.47px;font-size:28.5px;line-height:28.5px;color:rgba(0,0,0,0.85);transform:scaleX(0.9239);">Table</div><div class="t" style="left:528.03px;top:1333.47px;font-size:28.5px;line-height:28.5px;color:rgba(0,0,0,0.85);transform:scaleX(0.9825);">Form</div><div class="t" style="left:528.06px;top:1397.47px;font-size:28.5px;line-height:28.5px;color:rgba(0,0,0,0.85);transform:scaleX(0.9702);">Details</div><div class="t" style="left:529.07px;top:1461.47px;font-size:28.5px;line-height:28.5px;color:rgba(0,0,0,0.85);transform:scaleX(0.9339);">Calendar</div><div class="t" style="left:528.09px;top:1525.47px;font-size:28.5px;line-height:28.5px;color:rgba(0,0,0,0.85);transform:scaleX(0.9547);">Kanban</div><div class="t" style="left:472.43px;top:1589.47px;font-size:28.5px;line-height:28.5px;color:rgba(0,0,0,0.45);transform:scaleX(0.9855);">Media</div><div class="t" style="left:527.96px;top:1653.47px;font-size:28.5px;line-height:28.5px;color:rgba(0,0,0,0.85);transform:scaleX(1.0187);">Markdown</div><div class="a" style="left:701px;top:715px;width:248px;height:592px;background:#fff;border-radius:4px;box-shadow:0 6px 12px -8px rgba(0,0,0,0.12),0 12px 32px 0 rgba(0,0,0,0.08),0 18px 56px 16px rgba(0,0,0,0.05);"></div><svg class="a" style="left:907px;top:940px;" width="17" height="23" viewBox="907 940 17 23"><path d="M910.5,943.0 L920.3,951 L910.5,959.0" fill="none" stroke="rgba(0,0,0,0.45)" stroke-width="2.0" stroke-linecap="round" stroke-linejoin="round" stroke-linejoin="miter"/></svg><svg class="a" style="left:907px;top:1068px;" width="17" height="23" viewBox="907 1068 17 23"><path d="M910.5,1071.0 L920.3,1079 L910.5,1087.0" fill="none" stroke="rgba(0,0,0,0.45)" stroke-width="2.0" stroke-linecap="round" stroke-linejoin="round" stroke-linejoin="miter"/></svg><svg class="a" style="left:907px;top:1132px;" width="17" height="23" viewBox="907 1132 17 23"><path d="M910.5,1135.0 L920.3,1143 L910.5,1151.0" fill="none" stroke="rgba(0,0,0,0.45)" stroke-width="2.0" stroke-linecap="round" stroke-linejoin="round" stroke-linejoin="miter"/></svg><div class="t" style="left:725.33px;top:741.87px;font-size:28.5px;line-height:28.5px;color:rgba(0,0,0,0.45);transform:scaleX(0.9739);">Select collection</div><div class="t" style="left:732.77px;top:805.87px;font-size:28.5px;line-height:28.5px;color:rgba(0,0,0,0.85);transform:scaleX(0.9139);">Users</div><div class="t" style="left:732.77px;top:869.87px;font-size:28.5px;line-height:28.5px;color:rgba(0,0,0,0.85);transform:scaleX(0.9129);">Roles</div><div class="t" style="left:733.65px;top:933.87px;font-size:28.5px;line-height:28.5px;color:rgba(0,0,0,0.85);transform:scaleX(0.9537);">Customers</div><div class="t" style="left:732.67px;top:997.87px;font-size:28.5px;line-height:28.5px;color:rgba(0,0,0,0.85);transform:scaleX(0.9673);">Products</div><div class="t" style="left:733.64px;top:1061.87px;font-size:28.5px;line-height:28.5px;color:rgba(0,0,0,0.85);transform:scaleX(0.9647);">Orders</div><div class="t" style="left:734.60px;top:1125.87px;font-size:28.5px;line-height:28.5px;color:rgba(0,0,0,0.85);transform:scaleX(0.8625);">Tasks</div><div class="t" style="left:733.62px;top:1189.87px;font-size:28.5px;line-height:28.5px;color:rgba(0,0,0,0.85);transform:scaleX(0.9778);">Order details</div><div class="t" style="left:732.67px;top:1253.87px;font-size:28.5px;line-height:28.5px;color:rgba(0,0,0,0.85);transform:scaleX(0.9670);">Plugins</div><div class="a" style="left:955px;top:1051px;width:312px;height:225px;background:#fff;border-radius:4px;box-shadow:0 6px 12px -8px rgba(0,0,0,0.12),0 12px 32px 0 rgba(0,0,0,0.08),0 18px 56px 16px rgba(0,0,0,0.05);"></div><div class="a" style="left:955px;top:1131px;width:312px;height:2px;background:#f0f0f0"></div><div class="a" style="left:955px;top:1205px;width:312px;height:64px;background:#f5f5f5"></div><svg class="a" style="left:1233px;top:1165px;" width="17" height="23" viewBox="1233 1165 17 23"><path d="M1236.3,1168.8 L1246.1,1176.8 L1236.3,1184.8" fill="none" stroke="rgba(0,0,0,0.45)" stroke-width="2.0" stroke-linecap="round" stroke-linejoin="round" stroke-linejoin="miter"/></svg><svg class="a" style="left:1233px;top:1228px;" width="17" height="23" viewBox="1233 1228 17 23"><path d="M1236.3,1231.8 L1246.1,1239.8 L1236.3,1247.8" fill="none" stroke="rgba(0,0,0,0.45)" stroke-width="2.0" stroke-linecap="round" stroke-linejoin="round" stroke-linejoin="miter"/></svg><div class="t" style="left:978.37px;top:1076.87px;font-size:28.5px;line-height:28.5px;color:rgba(0,0,0,0.85);transform:scaleX(0.9674);">Blank block</div><div class="t" style="left:978.30px;top:1159.87px;font-size:28.5px;line-height:28.5px;color:rgba(0,0,0,0.85);">Duplicate template</div><div class="t" style="left:978.37px;top:1222.87px;font-size:28.5px;line-height:28.5px;color:rgba(0,0,0,0.85);transform:scaleX(0.9654);">Reference template</div><div class="a" style="left:1281px;top:1213px;width:330px;height:208px;background:#fff;border-radius:4px;box-shadow:0 6px 12px -8px rgba(0,0,0,0.12),0 12px 32px 0 rgba(0,0,0,0.08),0 18px 56px 16px rgba(0,0,0,0.05);"></div><div class="t" style="left:1306.00px;top:1238.87px;font-size:28.5px;line-height:28.5px;color:rgba(0,0,0,0.85);transform:scaleX(0.9773);">To be shipped list</div><div class="t" style="left:1305.02px;top:1303.47px;font-size:28.5px;line-height:28.5px;color:rgba(0,0,0,0.85);transform:scaleX(0.9774);">Orders table</div><div class="t" style="left:1305.02px;top:1367.27px;font-size:28.5px;line-height:28.5px;color:rgba(0,0,0,0.85);transform:scaleX(0.9842);">Customers' order table</div><svg class="a" style="left:630px;top:1570px;" width="50" height="120" viewBox="630 1570 50 120"><path d="M663.1,1683.3 H675.1 V1576.2 H668.3 C658.5,1583.3 649,1588.3 638.5,1592.2 V1604.9 C648,1601.6 656.3,1597.3 663.1,1592.4 Z" fill="#00a800"/></svg><svg class="a" style="left:845px;top:1250px;" width="80" height="122" viewBox="845 1250 80 122"><path d="M856.9,1269.4 C864,1263 873.5,1259.9 884.6,1259.9 C901.5,1259.9 913.6,1271 913.6,1288.8 C913.6,1300 909,1309 899,1318 L878,1334.5 C869,1342 865.6,1348 865.6,1355.4 H917.7 V1366.5 H853.2 V1352 C853.2,1342 859,1333.5 871.4,1323.5 L889,1309.5 C897.5,1302.5 901.6,1297 901.6,1288.8 C901.6,1276.5 894,1269.8 883,1269.8 C873.5,1269.8 864.5,1274 856.9,1281.4 Z" fill="#00a800"/></svg><svg class="a" style="left:1172px;top:1248px;" width="76" height="122" viewBox="1172 1248 76 122"><path d="M1183.9,1261.1 C1191,1257 1199,1255.1 1207.3,1255.1 C1225,1255.1 1236.7,1266 1236.7,1281.3 C1236.7,1294 1229,1303.5 1216.8,1306.7 C1231,1309.5 1240.6,1319.5 1240.6,1332.1 C1240.6,1350 1226.5,1362.7 1208.1,1362.7 C1196,1362.7 1186.5,1360 1179.9,1357.5 V1344.4 C1187.5,1349.5 1196,1352.8 1205.7,1352.8 C1218.5,1352.8 1227.1,1344.5 1227.1,1332.1 C1227.1,1319 1217.5,1311.5 1205.7,1311.5 H1190.2 V1302 H1204.1 C1216.5,1302 1224.8,1294 1224.8,1282.1 C1224.8,1271.5 1216.5,1265.1 1204.9,1265.1 C1197,1265.1 1190,1267.8 1183.9,1271.8 Z" fill="#00a800"/></svg><div class="t" style="left:1526.04px;top:1380.30px;font-size:150px;line-height:150px;color:#00a800;transform:scale(0.9868,1.0291)">4</div><svg class="a" style="left:80px;top:1108px;" width="360" height="42" viewBox="80 1108 360 42"><path d="M88,1123.6 L402.5,1123.2 L400.2,1115.5 L429.5,1129.9 L400.2,1143.6 L403,1136 L88,1126.3 Z" fill="#ed1c24"/></svg></body></html>
